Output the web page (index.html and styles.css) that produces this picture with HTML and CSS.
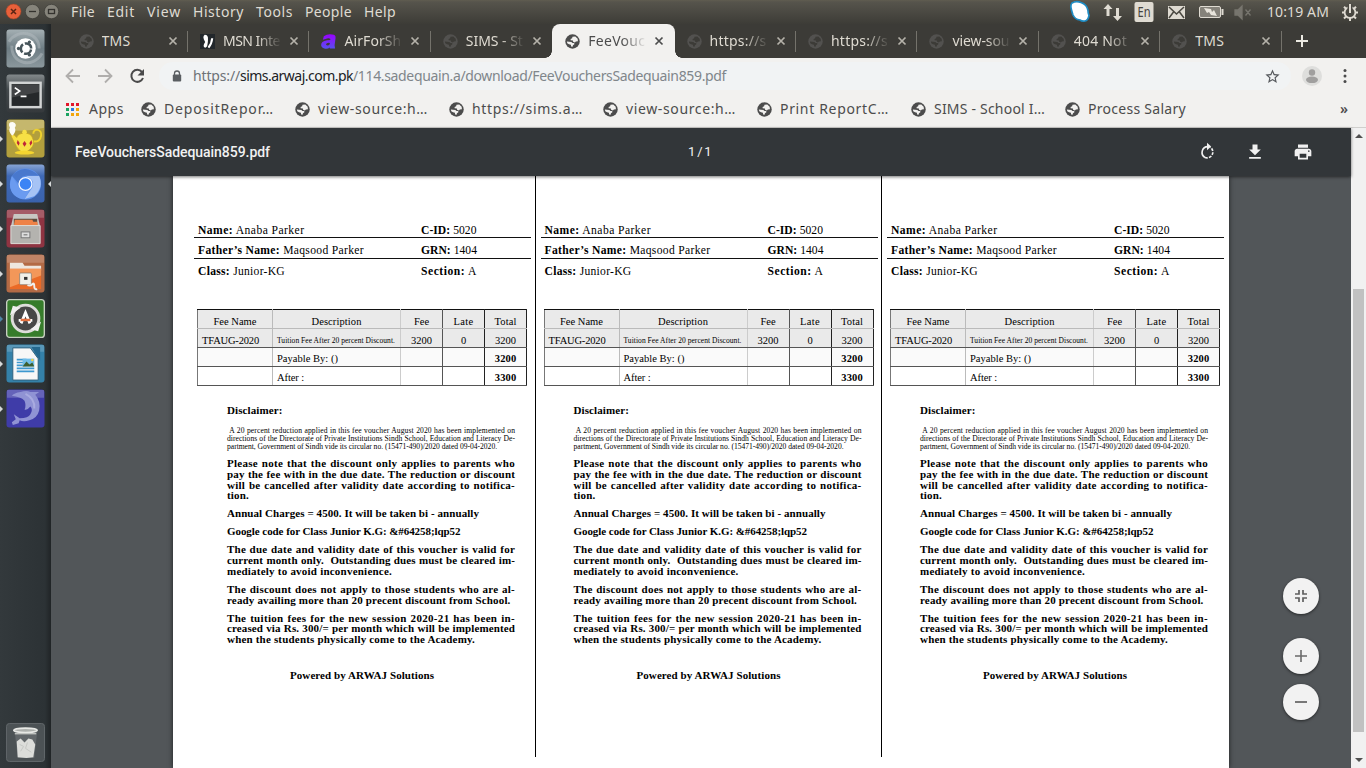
FILE: index.html
```html
<!DOCTYPE html>
<html lang="en">
<head>
<meta charset="utf-8">
<title>FeeVouchersSadequain859.pdf</title>
<link rel="stylesheet" href="styles.css">
</head>
<body>
<svg class="defs" width="0" height="0">
  <symbol id="globe" viewBox="0 0 16 16"><circle cx="8" cy="8" r="7.700" fill="currentColor"/><path class="land" d="M8 2.800 11 2.600 13.500 5 13.800 7.600 11.600 7.900 10.500 9 8.600 8.200 8.400 6.800 6 6.700 6 5.200 7.600 4.600z M2 8 6.800 8.400 8 9.500 9.800 9.700 10 10.900 8.500 12 8.100 13.600 6.500 13.400 6.300 11.500 4.300 10.800 2.400 9.800z"/></symbol>
  <symbol id="close" viewBox="0 0 10 10"><path d="M1.500 1.500l7 7M8.500 1.500l-7 7" stroke="currentColor" stroke-width="1.700"/></symbol>
  <symbol id="tile" viewBox="0 0 40 40"><rect x=".5" y=".5" width="39" height="39" rx="3"/></symbol>
</svg>

<header class="menubar">
  <svg class="winbtns" viewBox="0 0 56 24"><circle cx="8.500" cy="11.500" r="7.500" fill="#e8603a" stroke="#a84426" stroke-width=".6"/><path d="M6 9l5 5m0-5l-5 5" stroke="#5a2413" stroke-width="1.500"/><circle cx="27.500" cy="11.500" r="7.200" fill="#86847b" stroke="#3a3935" stroke-width=".7"/><path d="M24 11.500h7" stroke="#33322e" stroke-width="1.300"/><circle cx="46.500" cy="11.500" r="7.200" fill="#86847b" stroke="#3a3935" stroke-width=".7"/><rect x="43.500" y="9.500" width="6" height="4" fill="none" stroke="#33322e" stroke-width="1.300"/></svg>
  <nav class="menus"><span data-w="24">File</span><span data-w="28">Edit</span><span data-w="34">View</span><span data-w="51">History</span><span data-w="37">Tools</span><span data-w="47">People</span><span data-w="32">Help</span></nav>
  <svg class="tray" viewBox="1066 0 190 24"><path d="M1072 3q4-2.500 9-.5 6 2 7 8 0 3 1 5-1 5-4 5.500-3 .5-5-1-5-.5-7-5-1-3-1.500-5-1.500-5 .5-7z" fill="#fff" stroke="#1e8cc4" stroke-width="1.700"/><g fill="#dfdbd2"><path d="M1103.500 9l4.500-5 4.500 5h-3v7h-3v-7zM1113 16h3V8h3v8h3l-4.500 5z"/><rect x="1134.500" y="2" width="19" height="20" rx="2"/><rect x="1168" y="6" width="17" height="13"/></g><path d="M1169 7l7.500 7 7.500-7M1169 18l4.500-6M1184 18l-4.500-6" stroke="#494740" stroke-width="1.500" fill="none"/><rect x="1199.500" y="6.500" width="21" height="11" rx="1.500" fill="#85827a" stroke="#dfdbd2"/><path d="M1222.500 9v6" stroke="#dfdbd2" stroke-width="2"/><path d="M1204 8l7 1 1 3 2-2 3 6-6-1-2-3-2 1z" fill="#e8e4db"/><path d="M1235 10h3l4-4v13l-4-4h-3zM1245.500 9.500l5 6m0-6l-5 6" fill="#77756e" stroke="#77756e" stroke-width="1.300"/><text x="1137.500" y="17" class="lang" textLength="13" lengthAdjust="spacingAndGlyphs">En</text></svg>
  <span class="clock" data-w="62">10:19 AM</span>
  <svg class="gear" viewBox="0 0 18 18"><circle cx="9" cy="9.500" r="5.400" fill="none" stroke="#dfdbd2" stroke-width="1.800"/><path d="M9 1.500v8" stroke="#494740" stroke-width="5"/><g stroke="#dfdbd2" stroke-width="2"><path d="M9 1v9M1 9.500h3M14 9.500h3M9 15v3M3 3.700l2 2M15 3.700l-2 2M3 15.500l2-2M15 15.500l-2-2"/></g></svg>
</header>

<div class="desktop">
<aside class="launcher">
  <div class="app"><svg viewBox="0 0 40 40"><use href="#tile" fill="url(#gGray)"/><defs><linearGradient id="gGray" x2="0" y2="1"><stop stop-color="#a4afb3"/><stop offset=".5" stop-color="#6e7d84"/><stop offset="1" stop-color="#8b989d"/></linearGradient><linearGradient id="gBlk" x2="0" y2="1"><stop stop-color="#83898b"/><stop offset=".4" stop-color="#444a4d"/><stop offset="1" stop-color="#35393c"/></linearGradient><linearGradient id="gBlue" x2="0" y2="1"><stop stop-color="#87a4d4"/><stop offset=".3" stop-color="#3f69b5"/><stop offset="1" stop-color="#3a62ad"/></linearGradient></defs><path d="M3 13C12-1 34 3 34 20M37 25C28 41 5 36 6 17" fill="none" stroke="#b3bcc0" stroke-width="3" opacity=".5"/><circle cx="20" cy="20" r="10.500" fill="#fff"/><circle cx="20.500" cy="20" r="5.300" fill="none" stroke="#46545a" stroke-width="2.600" stroke-dasharray="9.200 1.900" transform="rotate(10 20 20)"/><g fill="#46545a"><circle cx="12.800" cy="20" r="1.700"/><circle cx="24" cy="13.400" r="1.700"/><circle cx="24" cy="26.600" r="1.700"/></g></svg></div>
  <div class="app"><svg viewBox="0 0 40 40"><use href="#tile" fill="url(#gBlk)"/><rect x="4.500" y="9" width="31" height="25" fill="#26292b" stroke="#d2d4d4" stroke-width="2.500"/><path d="M6 10.500h28v8L6 24z" fill="#fff" opacity=".13"/><path d="M9 14l5 3.500-5 3.500M15 23h6" fill="none" stroke="#fff" stroke-width="1.700"/></svg></div>
  <div class="app run"><svg viewBox="0 0 40 40"><use href="#tile" fill="#b29f3d"/><path d="M1 1h38v8Q20 14 1 11z" fill="#fff" opacity=".25"/><path d="M28 15c0-6 9-5 8 2q-1 7-8 6" fill="none" stroke="#efd12d" stroke-width="2"/><path d="M5 17l3-1 3 3c1-6 15-6 16 0 4 8-2 12-5 14l3 2H12l3-2c-4-3-5-7-7-10z" fill="#f7e045" stroke="#c6a21b" stroke-width=".7"/><circle cx="19" cy="13.500" r="2.400" fill="#f7e045"/><ellipse cx="19" cy="34.500" rx="10" ry="2" fill="#f5d52f"/><path d="M12 21.500l2 3-1 3-2-3zM19 22.500l2 3-2 3-2-3zM26 21.500l1 3-2 3-1-3z" fill="#bf2738"/><path d="M6 17q-4-5-2-8-3-6 3-6 5 2 2 6 2 3-2 8z" fill="#fff" opacity=".95"/></svg></div>
  <div class="app run focus"><svg viewBox="0 0 40 40"><use href="#tile" fill="url(#gBlue)"/><circle cx="20" cy="20.500" r="16" fill="#5d91ec"/><path d="M20 12h14q5 12-5 21l-10 3 8-12q3-8-7-12z" fill="#a6c3f5"/><path d="M6 12L14 25q4 5 10 2l-5 9Q5 35 4 21z" fill="#6b9bf0"/><path d="M6 12q13-14 28 0H20q-6 1-7 8z" fill="#4978cd"/><circle cx="20" cy="20.500" r="6.600" fill="#3c84f5" stroke="#f2f6ff" stroke-width="1.300"/></svg></div>
  <div class="app run"><svg viewBox="0 0 40 40"><use href="#tile" fill="#8f3442"/><path d="M1 1h38v8H1z" fill="#fff" opacity=".2"/><path d="M8 5h24l3 13H5z" fill="#c8c7c3"/><path d="M8 10h24v8H8z" fill="#5c4c3f"/><path d="M9 11h18l1 2h4l1 5H8z" fill="#ee8247"/><path d="M5 17h30v18.500H5z" fill="#b4b3af" stroke="#deddd9"/><rect x="15.500" y="23.500" width="9" height="6" fill="#ddd" stroke="#777"/><path d="M18 26.500h4" stroke="#666"/></svg></div>
  <div class="app run"><svg viewBox="0 0 40 40"><use href="#tile" fill="#b36a45"/><path d="M1 1h38v8H1z" fill="#fff" opacity=".18"/><path d="M4 9h13l2 3h17v5H4z" fill="#eee7df"/><path d="M4 15h32v21H4z" fill="#ea6a26"/><path d="M4 15h32v7L4 34z" fill="#f7af75" opacity=".65"/><rect x="14" y="19.500" width="12" height="12" rx="1" fill="#f1f0ea" stroke="#79736a" stroke-width=".7"/><rect x="18.500" y="23.500" width="3.500" height="3" fill="#333"/><path d="M22 32q3 1 5-1t2 2 3 3" fill="none" stroke="#eee" stroke-width="2"/></svg></div>
  <div class="app start"><svg viewBox="0 0 40 40"><rect x=".7" y=".7" width="38.600" height="38.600" rx="3" fill="#367c2b" stroke="#c6cec0" stroke-width="1.400"/><circle cx="20" cy="20" r="13.700" fill="#474747" stroke="#dedddb" stroke-width="3"/><path d="M4 17l3-10 8 2zM36 23l-3 10-8-2z" fill="#f0f0f0"/><path d="M15.500 25l4.500-11 4.500 11M13 22h4m6 0h4" fill="none" stroke="#fff" stroke-width="2.800"/><path d="M15 21.500h10" stroke="#e3703e" stroke-width="2.500"/></svg></div>
  <div class="app run"><svg viewBox="0 0 40 40"><use href="#tile" fill="#3481a9"/><path d="M1 1h38v7H1z" fill="#fff" opacity=".18"/><path d="M26 3h9v14z" fill="#24678d"/><path d="M7 4h18l8 11v22H7z" fill="#f7f7f7" stroke="#2f617d"/><path d="M11 16h10m-10 3h10m-10 3h10m-10 3h18m-18 3h18" stroke="#3d98cf" stroke-width="1.700"/><path d="M17 15h12v8H17z" fill="#6fbde8"/><path d="M17 23l4-5 3 3 3-2 2 4z" fill="#3d5f31"/><circle cx="27" cy="16.500" r="1.300" fill="#f5d040"/></svg></div>
  <div class="app run"><svg viewBox="0 0 40 40"><use href="#tile" fill="#3f3ca8"/><path d="M1 1h38v8H1z" fill="#fff" opacity=".2"/><path d="M6 7q2-3 9-4 6-2 10 0h9l-4 3q6 7 4 16-2 8-10 10-6 2-10 0l-1 3-6 2-1-3 4-3-2-5 6 4q9 0 11-4 3-5 0-8-3 4-6 3 2-4 0-9-4-4-13-5z" fill="#9093d4"/><path d="M20 5q10 5 9 15" fill="none" stroke="#a9abe0" stroke-width="2"/></svg></div>
  <div class="app trash"><svg viewBox="0 0 40 40"><rect x=".5" y=".5" width="39" height="39" rx="3" fill="#4c5255" stroke="#62676a"/><path d="M9 9h23l-3 27H12z" fill="#62676a"/><path d="M11 19l4-3 4 4 4-4 4 1 3 5-2 13-7 1-9-1z" fill="#dcddda"/><path d="M14 22l4 2-3 5m7-9l-2 6 6 4" fill="none" stroke="#c4c6c3"/><ellipse cx="20" cy="7.500" rx="12" ry="2.300" fill="#aeb1ae" stroke="#e7e8e5" stroke-width="1.700"/><path d="M9 11h22" stroke="#c8cac7" stroke-width="1.300"/></svg></div>
</aside>

<main class="browser">
  <div class="tabs">
    <div class="tab"><svg class="fav"><use href="#globe"/></svg><span class="tt"><b data-w="29">TMS</b></span><svg class="x"><use href="#close"/></svg></div>
    <div class="tab"><svg class="fav" viewBox="0 0 16 16"><rect width="16" height="16" fill="#22272b"/><path d="M5 .8q4 0 3.500 5.200 0 3-.5 5-.5 4-3 3.500Q2.500 13 5.500 8.500 2 3 5 .8z" fill="#fff"/><path d="M13 4.500q-.5 6-4 10" fill="none" stroke="#fff" stroke-width="2.200"/></svg><span class="tt fade"><b data-w="57">MSN Inte</b></span><svg class="x"><use href="#close"/></svg></div>
    <div class="tab"><svg class="fav" viewBox="0 0 16 16"><path d="M3 2.500Q7-.5 12 .5q4 0 3.500 4l-1 7.500.5 3.500H9.500l-.3-1Q7 16.500 3.500 15.500-.5 14.500.3 10.500 2 6.500 10 6.500q.5-2.500-2.500-2L2 6zM9.500 9.500Q5.500 9 5.300 11.500q2 2 4-.5z" fill="url(#gAir)"/><defs><linearGradient id="gAir" x2="0" y2="1"><stop stop-color="#9a00ff"/><stop offset="1" stop-color="#5750f0"/></linearGradient></defs></svg><span class="tt fade"><b data-w="57">AirForSh</b></span><svg class="x"><use href="#close"/></svg></div>
    <div class="tab nosep"><svg class="fav"><use href="#globe"/></svg><span class="tt fade"><b data-w="57">SIMS - St</b></span><svg class="x"><use href="#close"/></svg></div>
    <div class="tab active"><svg class="fav"><use href="#globe"/></svg><span class="tt fade"><b data-w="57">FeeVouc</b></span><svg class="x"><use href="#close"/></svg></div>
    <div class="tab"><svg class="fav"><use href="#globe"/></svg><span class="tt fade"><b data-w="57">https://s</b></span><svg class="x"><use href="#close"/></svg></div>
    <div class="tab"><svg class="fav"><use href="#globe"/></svg><span class="tt fade"><b data-w="57">https://s</b></span><svg class="x"><use href="#close"/></svg></div>
    <div class="tab"><svg class="fav"><use href="#globe"/></svg><span class="tt fade"><b data-w="57">view-sou</b></span><svg class="x"><use href="#close"/></svg></div>
    <div class="tab"><svg class="fav"><use href="#globe"/></svg><span class="tt fade"><b data-w="53">404 Not</b></span><svg class="x"><use href="#close"/></svg></div>
    <div class="tab"><svg class="fav"><use href="#globe"/></svg><span class="tt"><b data-w="29">TMS</b></span><svg class="x"><use href="#close"/></svg></div>
    <svg class="plus" viewBox="0 0 12 12"><path d="M6 0v12M0 6h12" stroke="#eceae2" stroke-width="2"/></svg>
  </div>

  <div class="toolbar">
    <svg class="nav" viewBox="0 0 84 20"><g fill="none" stroke-width="1.800"><path d="M15 10H2m6-6.500L1.500 10 8 16.500M33 10h13M40 3.500L46.500 10 40 16.500" stroke="#b0aeac"/><path d="M77 6a6 6 0 1 0 1 6" stroke="#4a4a4a" stroke-width="2"/></g><path d="M79 3v6.500h-6.500z" fill="#4a4a4a"/></svg>
    <div class="omni">
      <svg class="lock" viewBox="0 0 10 12"><path d="M2.500 5V3.500a2.500 2.500 0 0 1 5 0V5" fill="none" stroke="#5a5e62" stroke-width="1.300"/><rect x=".8" y="4.500" width="8.400" height="7" rx="1" fill="#5a5e62"/></svg>
      <span class="url"><i data-w="47">https://</i><em data-w="113">sims.arwaj.com.pk</em><i data-w="373">/114.sadequain.a/download/FeeVouchersSadequain859.pdf</i></span>
      <svg class="star" viewBox="0 0 24 24"><path d="M22 9.240l-7.190-.62L12 2 9.190 8.630 2 9.240l5.460 4.730L5.820 21 12 17.270 18.180 21l-1.630-7.030L22 9.240zM12 15.400l-3.760 2.270 1-4.280-3.320-2.880 4.380-.38L12 6.100l1.710 4.040 4.380.38-3.320 2.880 1 4.280L12 15.400z" fill="#55585c"/></svg>
    </div>
    <svg class="user" viewBox="0 0 20 20"><circle cx="10" cy="10" r="10" fill="#dededc"/><circle cx="10" cy="6.500" r="3.200" fill="#a09f9e"/><ellipse cx="10" cy="13.800" rx="6" ry="3.300" fill="#a09f9e"/></svg>
    <svg class="dots" viewBox="0 0 4 16"><g fill="#4b4b4b"><circle cx="2" cy="2.500" r="1.500"/><circle cx="2" cy="8" r="1.500"/><circle cx="2" cy="13.500" r="1.500"/></g></svg>
  </div>

  <div class="bookmarks">
    <div class="bm apps"><svg class="grid" viewBox="0 0 13 13"><path d="M0 0h3v3H0zM5 0h3v3H5zM10 0h3v3h-3z" fill="#e3172a"/><path d="M0 5h3v3H0z" fill="#1aa260"/><path d="M5 5h3v3H5z" fill="#2a7ae4"/><path d="M10 5h3v3h-3zM5 10h3v3H5zM10 10h3v3h-3z" fill="#f2a60c"/><path d="M0 10h3v3H0z" fill="#1aa260"/></svg><span data-w="35">Apps</span></div>
    <div class="bm"><svg class="fav"><use href="#globe"/></svg><span data-w="110">DepositRepor…</span></div>
    <div class="bm"><svg class="fav"><use href="#globe"/></svg><span data-w="110">view-source:h…</span></div>
    <div class="bm"><svg class="fav"><use href="#globe"/></svg><span data-w="111">https://sims.a…</span></div>
    <div class="bm"><svg class="fav"><use href="#globe"/></svg><span data-w="110">view-source:h…</span></div>
    <div class="bm"><svg class="fav"><use href="#globe"/></svg><span data-w="109">Print ReportC…</span></div>
    <div class="bm"><svg class="fav"><use href="#globe"/></svg><span data-w="111">SIMS - School I…</span></div>
    <div class="bm"><svg class="fav"><use href="#globe"/></svg><span data-w="98">Process Salary</span></div>
    <span class="more">»</span>
  </div>

  <div class="content">
    <section class="viewer">
      <div class="pdfbar"><span class="fname" data-w="195">FeeVouchersSadequain859.pdf</span><span class="pages" data-w="23">1 / 1</span>
        <svg viewBox="0 0 24 24"><path d="M13 5.500A7 7 0 0 0 9.500 18.500" fill="none" stroke="#f1f1f1" stroke-width="2"/><path d="M9.500 18.600A7 7 0 0 0 19 12a7 7 0 0 0-3-5.700" fill="none" stroke="#f1f1f1" stroke-width="2" stroke-dasharray="3.400 1.500"/><path d="M12 1l5 4.500-5 4.500z" fill="#f1f1f1"/></svg>
        <svg viewBox="0 0 24 24"><path d="M19 9h-4V3H9v6H5l7 7 7-7zM5 18v2h14v-2H5z" fill="#f1f1f1"/></svg>
        <svg viewBox="0 0 24 24"><path d="M19 8H5c-1.660 0-3 1.340-3 3v6h4v4h12v-4h4v-6c0-1.660-1.340-3-3-3zm-3 11H8v-5h8v5zm3-7c-.55 0-1-.45-1-1s.45-1 1-1 1 .45 1 1-.45 1-1 1zm-1-9H6v4h12V3z" fill="#f1f1f1"/></svg>
      </div>
      <div class="canvas"><div class="page" id="page"></div></div>
      <div class="zoomers">
        <button><svg viewBox="0 0 12 12"><path d="M0 4h4V0M8 0v4h4M0 8h4v4M12 8H8v4" fill="none" stroke="#606060" stroke-width="1.700"/></svg></button>
        <button><svg viewBox="0 0 12 12"><path d="M0 6h12M6 0v12" stroke="#6a6a6a" stroke-width="1.600"/></svg></button>
        <button><svg viewBox="0 0 12 12"><path d="M0 6h12" stroke="#6a6a6a" stroke-width="1.800"/></svg></button>
      </div>
    </section>
    <div class="scroll"><svg viewBox="0 0 8 4"><path d="M0 4l4-4 4 4z" fill="#505050"/></svg><div class="thumb"></div><svg class="dn" viewBox="0 0 8 4"><path d="M0 0l4 4 4-4z" fill="#505050"/></svg></div>
  </div>
</main>
</div>

<template id="voucher">
  <article class="voucher">
    <div class="who"><span data-w="106.5"><b>Name:</b> Anaba Parker</span><span data-w="55.5"><b>C-ID:</b> 5020</span></div>
    <div class="who mid"><span data-w="166"><b>Father’s Name:</b> Maqsood Parker</span><span data-w="56"><b>GRN:</b> 1404</span></div>
    <div class="who last"><span data-w="87"><b>Class:</b> Junior-KG</span><span data-w="56"><b>Section:</b> A</span></div>
    <table class="fees">
      <tr class="shade"><td><span data-w="43">Fee Name</span></td><td><span data-w="50">Description</span></td><td><span data-w="15">Fee</span></td><td><span data-w="20">Late</span></td><td><span data-w="22">Total</span></td></tr>
      <tr class="shade"><td class="l5"><span data-w="57">TFAUG-2020</span></td><td class="l5 tiny"><span data-w="118">Tuition Fee After 20 percent Discount.</span></td><td><span data-w="21">3200</span></td><td>0</td><td><span data-w="21">3200</span></td></tr>
      <tr class="pale"><td></td><td class="l5"><span data-w="61">Payable By: ()</span></td><td></td><td></td><td><b data-w="21.5">3200</b></td></tr>
      <tr><td></td><td class="l5"><span data-w="27">After :</span></td><td></td><td></td><td><b data-w="21.5">3300</b></td></tr>
    </table>
    <div class="notes">
      <p><span data-w="55.5">Disclaimer:</span></p>
      <p class="small"><span data-j="288">&nbsp;A 20 percent reduction applied in this fee voucher August 2020 has been implemented on</span><span data-j="288">directions of the Directorate of Private Institutions Sindh School, Education and Literacy De-</span><span data-w="270">partment, Government of Sindh vide its circular no. (15471-490)/2020 dated 09-04-2020.</span></p>
      <p><span data-j="288">Please note that the discount only applies to parents who</span><span data-j="288">pay the fee with in the due date. The reduction or discount</span><span data-j="288">will be cancelled after validity date according to notifica-</span><span data-w="22">tion.</span></p>
      <p><span data-w="252">Annual Charges = 4500. It will be taken bi - annually</span></p>
      <p><span data-w="233.5">Google code for Class Junior K.G: &amp;#64258;lqp52</span></p>
      <p><span data-j="288">The due date and validity date of this voucher is valid for</span><span data-j="288">current month only.&nbsp; Outstanding dues must be cleared im-</span><span data-w="165">mediately to avoid inconvenience.</span></p>
      <p><span data-j="288">The discount does not apply to those students who are al-</span><span data-w="283.5">ready availing more than 20 precent discount from School.</span></p>
      <p><span data-j="288">The tuition fees for the new session 2020-21 has been in-</span><span data-j="288">creased via Rs. 300/= per month which will be implemented</span><span data-w="248">when the students physically come to the Academy.</span></p>
    </div>
    <div class="powered"><span data-w="144">Powered by ARWAJ Solutions</span></div>
  </article>
</template>
<script src="app.js"></script>
</body>
</html>
```

FILE: styles.css
```css
* { box-sizing: border-box; }
html, body { margin: 0; height: 768px; overflow: hidden; }
body { display: flex; flex-direction: column; font: 14px/20px "Noto Sans", "Open Sans", sans-serif; background: #525659; }
svg { display: block; flex: none; overflow: visible; }
.defs { position: absolute; }
[data-w], [data-j] { white-space: nowrap; }
i, em { font-style: normal; }

.menubar { height: 24px; flex: none; display: flex; align-items: center; background: linear-gradient(#605d50, #56544c 2px, #3d3c37); color: #dfdbd2; padding-left: 5px; }
.winbtns { width: 56px; height: 24px; }
.menus { display: flex; gap: 12px; margin-left: 10px; flex: 1; }
.tray { width: 190px; height: 24px; margin-right: 11px; }
.lang { font: 14px "Noto Sans", sans-serif; fill: #45433d; }
.clock { width: 62px; }
.gear { width: 18px; height: 18px; margin: 0 7px 0 12px; }

.desktop { display: flex; flex: 1; min-height: 0; }
.launcher { width: 51px; flex: none; display: flex; flex-direction: column; gap: 6px; padding: 5px 0 6px 5.500px; background: linear-gradient(90deg, #33393c, #2c3235 45px, #202426 51px); }
.app { position: relative; width: 39px; height: 39px; }
.app svg { width: 39px; height: 39px; }
.trash { margin-top: auto; }
.run::before, .start::before { content: ""; position: absolute; left: -5.500px; top: 17px; border: 3px solid transparent; border-left-color: #d5d8d9; border-right: 0; }
.start::before { border-left-color: #4f86a5; }
.focus::after { content: ""; position: absolute; right: -6px; top: 17px; border: 3px solid transparent; border-right-color: #d5d8d9; border-left: 0; }

.browser { flex: 1; min-width: 0; display: flex; flex-direction: column; }
.tabs { --land: #3c3b37; height: 34px; flex: none; display: flex; align-items: center; background: #3c3b37; padding-left: 15.500px; color: #dfdbd2; }
.tab { width: 121.450px; flex: none; height: 34px; display: flex; align-items: center; padding-left: 12px; background: linear-gradient(#74726b, #74726b) right 7px / 1px 21px no-repeat; }
.tab.nosep { background: none; }
.fav { width: 15px; height: 15px; color: #52514f; }
.land { fill: var(--land); }
.tab .fav { margin-right: 8px; }
.tt { width: 58px; overflow: hidden; }
.tt b { font-weight: 400; display: inline-block; }
.fade { -webkit-mask-image: linear-gradient(90deg, #000 34px, transparent 59px); mask-image: linear-gradient(90deg, #000 34px, transparent 59px); }
.x { width: 10px; height: 10px; margin-left: 8px; color: #b5b2aa; }
.tab.active { --land: #f2f1ef; position: relative; width: 122.300px; padding-left: 13px; background: #f2f1ef; border-radius: 8px 8px 0 0; color: #4c4c4c; }
.tab.active .x { color: #4c4c4c; }
.tab.active::before, .tab.active::after { content: ""; position: absolute; bottom: 0; width: 7px; height: 7px; }
.tab.active::before { left: -7px; background: radial-gradient(circle at 0 0, transparent 6.500px, #f2f1ef 7px); }
.tab.active::after { right: -7px; background: radial-gradient(circle at 100% 0, transparent 6.500px, #f2f1ef 7px); }
.active .fav, .bookmarks .fav { color: #4c4c4c; }
.plus { width: 12px; height: 12px; margin-left: 14.500px; }

.toolbar { height: 36px; flex: none; display: flex; align-items: center; background: #f2f1ef; padding-left: 14px; }
.nav { width: 84px; height: 20px; }
.omni { height: 28px; width: 1132px; margin-left: 10px; border-radius: 14px; background: #f1f3f4; display: flex; align-items: center; padding-left: 13px; }
.lock { width: 10px; height: 12px; }
.url { margin-left: 11px; display: flex; flex: 1; color: #80868b; }
.url em { color: #202124; }
.url i:first-child { color: #6d7277; }
.star { width: 17px; height: 17px; margin-right: 10px; }
.user { width: 20px; height: 20px; margin-left: 11px; }
.dots { width: 4px; height: 16px; margin-left: 21px; }

.bookmarks { --land: #f2f1ef; height: 34px; flex: none; display: flex; align-items: center; background: #f2f1ef; border-bottom: 1px solid #d0cfcd; padding: 0 18px 3px 15px; color: #4c4c4c; }
.bm { display: flex; align-items: center; gap: 8.500px; width: 154px; }
.bm.apps { width: 74.500px; gap: 10px; }
.grid { width: 13px; height: 13px; }
.more { margin-left: auto; line-height: 18px; font-weight: 600; }

.content { flex: 1; display: flex; min-height: 0; }
.viewer { flex: 1; min-width: 0; position: relative; background: #525659; }
.pdfbar { height: 48px; background: #323639; color: #f1f1f1; display: flex; align-items: center; padding: 0 38px 0 24px; font: 500 14px/20px Roboto, sans-serif; box-shadow: 0 1px 3px rgba(0,0,0,.55); position: relative; z-index: 1; }
.pdfbar svg { width: 20px; height: 20px; margin-left: 28px; }
.fname { width: 195px; }
.pages { margin-left: 418px; margin-right: auto; font-weight: 400; font-size: 13px; }
.canvas { padding-left: 122px; height: 592px; overflow: hidden; }
.page { width: 1056px; height: 592px; background: #fff; padding-left: 16px; display: flex; align-items: flex-start; box-shadow: 0 0 5px rgba(0,0,0,.65); }

.voucher { width: 346.500px; height: 581px; flex: none; padding: 43px 5px 0; border-right: 1px solid #000; font: 11.600px/20px "Liberation Serif", serif; color: #000; }
.voucher:last-child { border-right: 0; }
.who { width: 337px; display: flex; padding: 2px 0 0 4px; height: 19px; border-bottom: 1px solid #111; }
.who > span { width: 223px; flex: none; }
.who > span + span { width: auto; }
.who.mid { height: 20.500px; padding-top: 3px; }
.who.last { border: 0; height: 21px; padding-top: 3px; }
.fees { margin: 29.500px 0 0 3px; width: 330px; table-layout: fixed; border-collapse: collapse; font-size: 10.500px; line-height: 18px; border: 1px solid #111; }
.fees tr { height: 18.600px; }
.fees td { padding: 4px 0 0; height: 18.600px; line-height: 14px; text-align: center; border: 1px solid #555; }
.fees .shade td { padding-top: 5px; line-height: 13px; }
.fees td:nth-child(1) { width: 75px; border-right-color: #bbb; border-left-color: #777; }
.fees td:nth-child(2) { width: 128px; border-right-color: #ccc; }
.fees td:nth-child(3), .fees td:nth-child(4) { width: 42px; }
.fees td:nth-child(n+4) { border-right-color: #222; }
.fees td.l5 { text-align: left; padding-left: 4px; }
.fees td.tiny { font-size: 7.500px; }
.fees .shade { background: #eaeaea; }
.fees .shade:first-child td { border-bottom-color: #bbb; border-top-color: #111; }
.fees .pale { background: #fafafa; }
.notes { margin: 19px 0 0 33px; width: 288px; font-size: 11px; font-weight: 700; line-height: 10.700px; }
.notes p { margin: 0 0 7.400px; }
.notes p span { display: block; }
.notes p:first-child { margin-bottom: 10.800px; }
.notes .small { font-size: 7.600px; line-height: 8px; font-weight: 400; margin-bottom: 7.600px; }
.powered { margin: 25.500px 0 0 96px; font-weight: 700; font-size: 11px; line-height: 11px; }

.zoomers { position: absolute; z-index: 2; right: 32px; top: 450px; display: flex; flex-direction: column; gap: 10px; }
.zoomers button { width: 36px; height: 36px; border: 0; border-radius: 50%; padding: 12px; background: #f2f2f2; box-shadow: 0 1px 3px rgba(0,0,0,.55); }
.zoomers button:first-child { margin-bottom: 14px; }
.zoomers svg { width: 12px; height: 12px; }
.scroll { width: 15px; background: #f1f1f1; display: flex; flex-direction: column; align-items: center; padding: 6px 0; }
.scroll svg { width: 8px; height: 4px; }
.thumb { width: 11px; height: 443px; margin-top: 151px; background: #c1c1c1; }
.scroll .dn { margin-top: auto; }
```

FILE: app.js
```js
// Fill the page with three copies of the voucher.
const page = document.getElementById('page');
const tpl = document.getElementById('voucher');
for (let i = 0; i < 3; i++) page.append(tpl.content.cloneNode(true));

// Track each text run to its set width.
function naturalWidth(el) {
  const r = document.createRange();
  r.selectNodeContents(el);
  return r.getBoundingClientRect().width;
}
document.querySelectorAll('[data-w]').forEach(el => {
  const gap = (el.dataset.w - naturalWidth(el)) / el.textContent.length;
  el.style.letterSpacing = gap.toFixed(3) + 'px';
});

// Justified lines share the slack between letters and word gaps.
document.querySelectorAll('[data-j]').forEach(el => {
  const slack = el.dataset.j - naturalWidth(el);
  const words = el.textContent.split(/\s/).length - 1;
  el.style.letterSpacing = (slack * 0.7 / el.textContent.length).toFixed(3) + 'px';
  el.style.wordSpacing = (slack * 0.3 / words).toFixed(3) + 'px';
});
```
